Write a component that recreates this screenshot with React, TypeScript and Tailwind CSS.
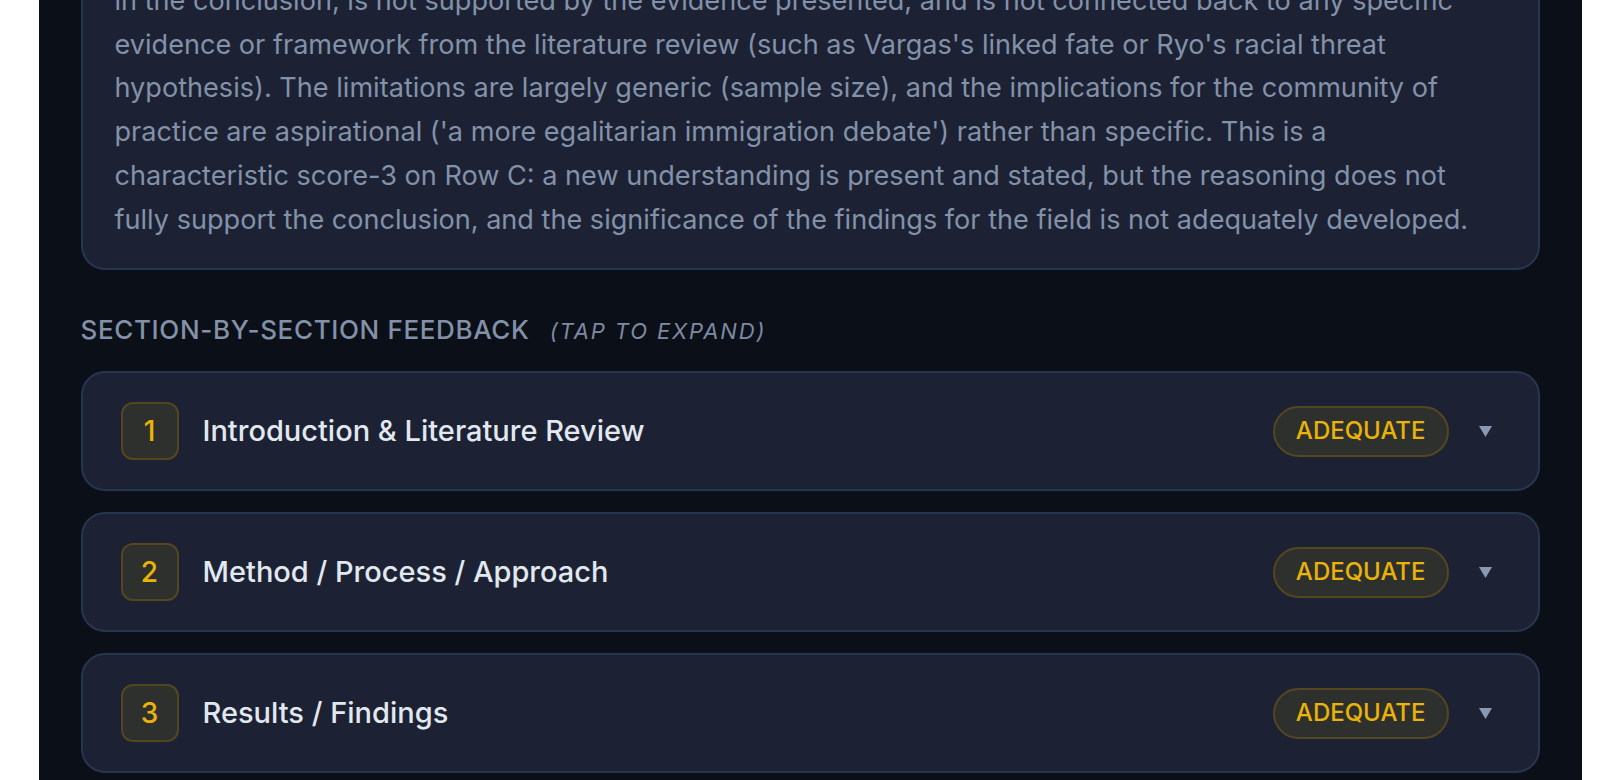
const summary =
  "in the conclusion, is not supported by the evidence presented, and is not connected back to any specific evidence or framework from the literature review (such as Vargas's linked fate or Ryo's racial threat hypothesis). The limitations are largely generic (sample size), and the implications for the community of practice are aspirational ('a more egalitarian immigration debate') rather than specific. This is a characteristic score-3 on Row C: a new understanding is present and stated, but the reasoning does not fully support the conclusion, and the significance of the findings for the field is not adequately developed.";

const sections = [
  { n: 1, title: 'Introduction & Literature Review', rating: 'ADEQUATE' },
  { n: 2, title: 'Method / Process / Approach', rating: 'ADEQUATE' },
  { n: 3, title: 'Results / Findings', rating: 'ADEQUATE' },
];

function SectionRow({ n, title, rating }: { n: number; title: string; rating: string }) {
  return (
    <div className="flex h-[120px] items-center rounded-[24px] border-2 border-[#27364f] bg-[#1c2233] pl-[38px] pr-[46px]">
      <div className="flex h-[58px] w-[58px] shrink-0 items-center justify-center rounded-[12px] border-2 border-[#54461f] bg-[#2e302e] text-[28px] font-medium text-[#eab308]">
        {n}
      </div>
      <div className="ml-[24px] flex-1 text-[29px] font-medium text-[#e2e8f0]">{title}</div>
      <span className="flex h-[51px] items-center rounded-full border-2 border-[#54461f] bg-[#2e302e] px-[21px] text-[24px] font-medium text-[#eab308]">
        {rating}
      </span>
      <svg className="ml-[30px]" width="13" height="11" viewBox="0 0 13 11">
        <polygon points="0,0 13,0 6.5,11" fill="#8a99b3" />
      </svg>
    </div>
  );
}

export default function App() {
  return (
    <div className="h-screen overflow-hidden bg-white" style={{ fontFamily: 'Inter, "Noto Sans", sans-serif' }}>
      <div className="mx-auto min-h-full w-[1543px] bg-[#0b0f17] px-[42px] pb-10">
        <div className="mt-[-55px] rounded-[24px] border-2 border-[#27364f] bg-[#1c2233] pl-[32px] pr-[54px] pt-[32px] pb-[27px]">
          <p className="text-[27.1px] leading-[43.7px] text-[#8391a9]">{summary}</p>
        </div>

        <div className="mt-[44px] mb-[24px] flex items-baseline leading-[32px]">
          <h3 className="text-[26px] font-medium uppercase tracking-[0.025em] text-[#8391a8]">
            Section-by-section feedback
          </h3>
          <span className="ml-[20px] text-[22px] uppercase italic tracking-[0.085em] text-[#7d8aa1]">
            (tap to expand)
          </span>
        </div>

        <div className="flex flex-col gap-[21px]">
          {sections.map((s) => (
            <SectionRow key={s.n} {...s} />
          ))}
        </div>
      </div>
    </div>
  );
}
